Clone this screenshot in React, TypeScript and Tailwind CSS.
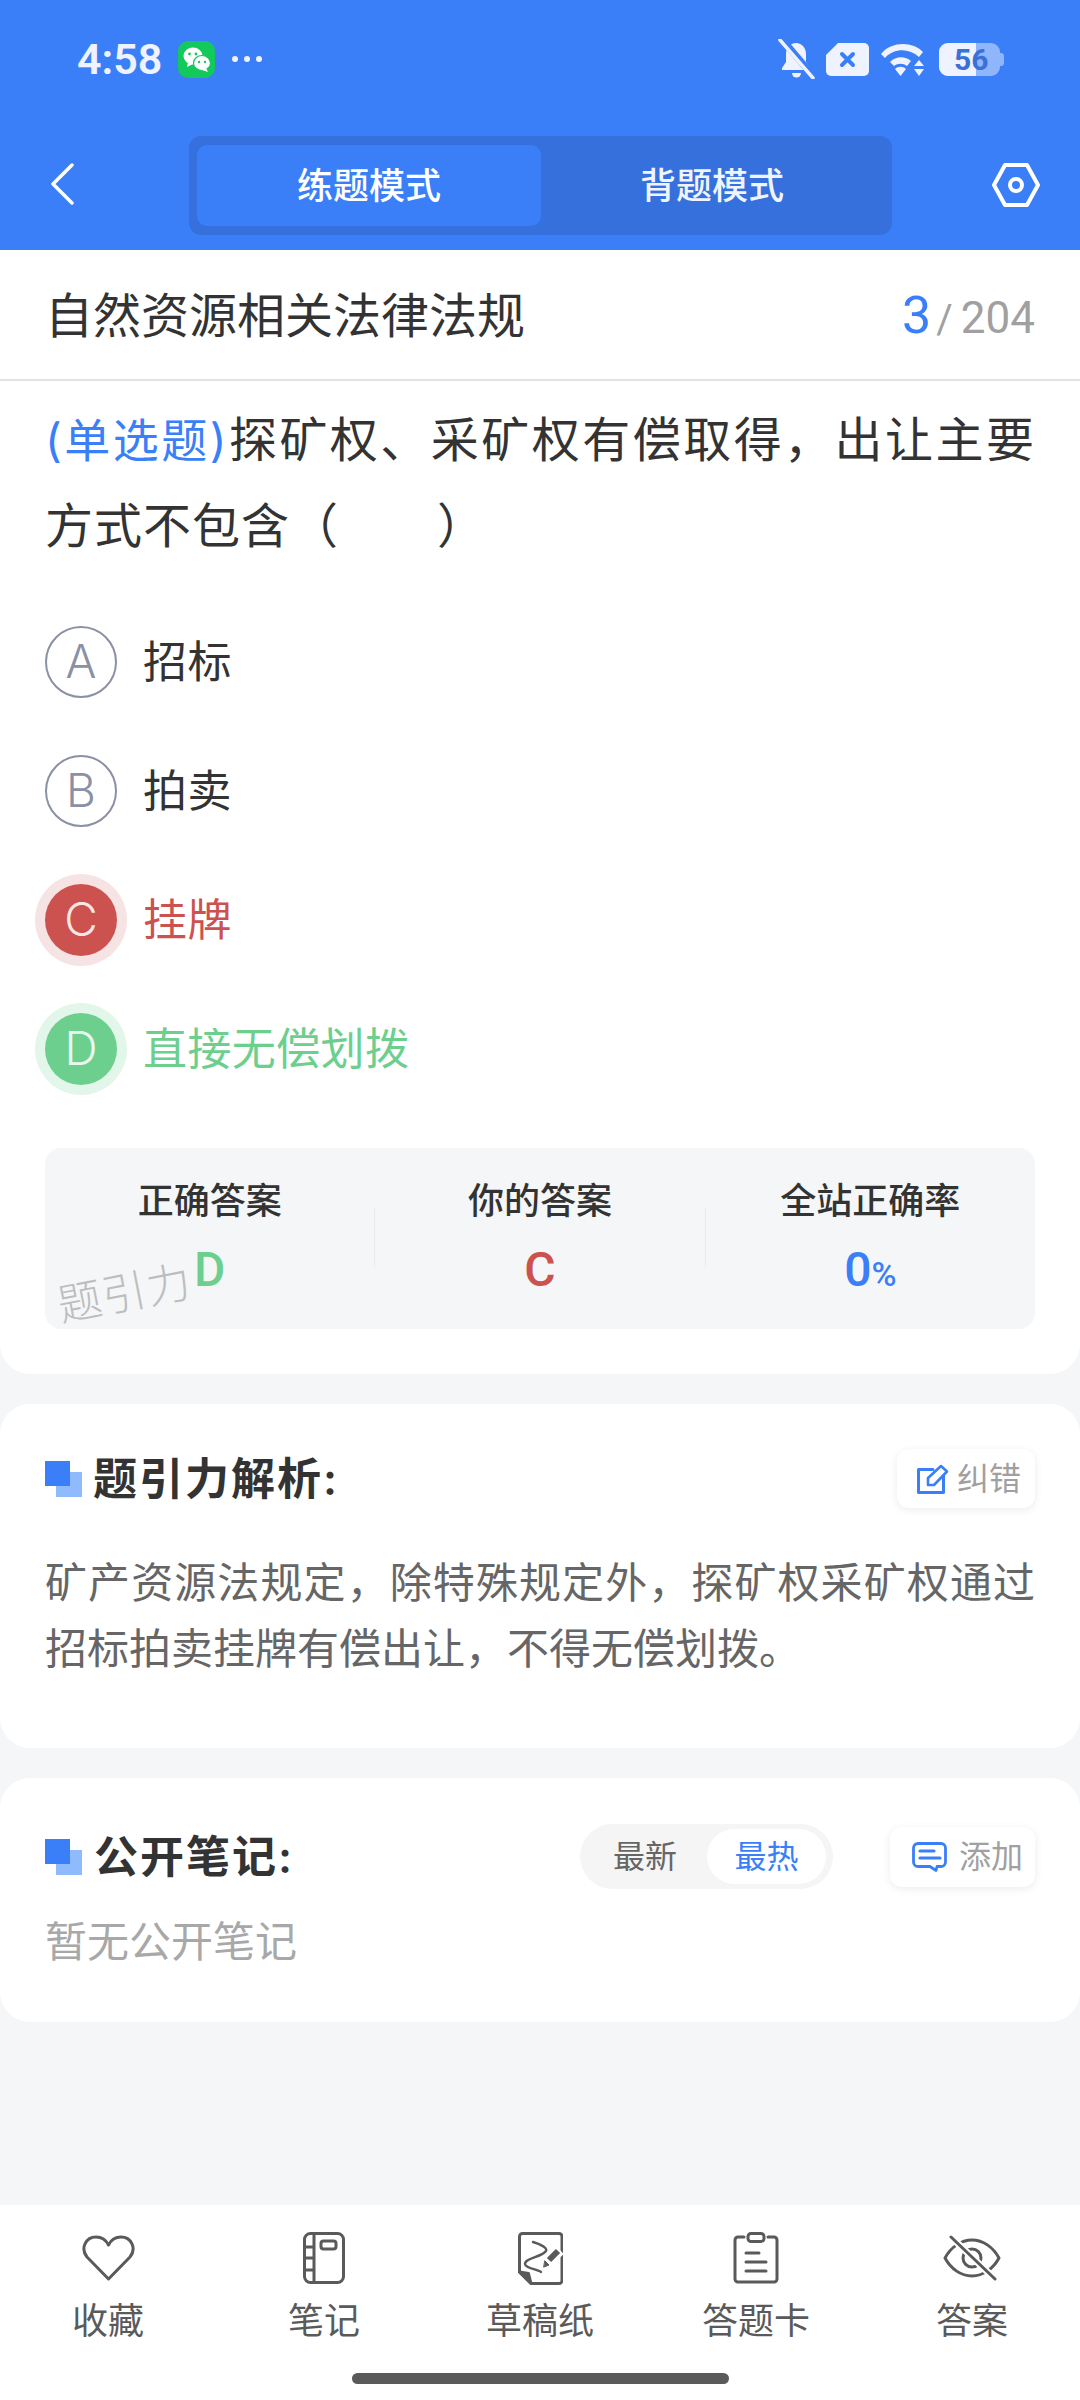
import React from "react";

const FONT = "font-['Inter','Noto_Sans_CJK_SC',sans-serif]";

function Squares() {
  return (
    <span className="relative block w-[37px] h-[36px] shrink-0">
      <span className="absolute left-[11px] top-[11px] w-[26px] h-[25px] bg-[#8fbafb]" />
      <span className="absolute left-0 top-0 w-[25px] h-[25px] bg-[#3b7ff8]" />
    </span>
  );
}

function Option({ letter, text, state }: { letter: string; text: string; state?: "wrong" | "right" }) {
  const circle =
    state === "wrong"
      ? "bg-[#cc5250] text-[#f8e6e5] shadow-[0_0_0_10px_#f6e4e4]"
      : state === "right"
      ? "bg-[#6dcf8e] text-[#e8f8ee] shadow-[0_0_0_10px_#e2f6ea]"
      : "border-2 border-[#8b90a5] text-[#8b90a5]";
  const label = state === "wrong" ? "text-[#cc5250]" : state === "right" ? "text-[#6dcf8e]" : "text-[#333333]";
  return (
    <div className="flex items-center h-[129px]">
      <div className={`w-[72px] h-[72px] rounded-full flex items-center justify-center text-[46px] font-light ${circle}`}>{letter}</div>
      <div className={`ml-[26px] text-[44px] tracking-[0.4px] ${label}`}>{text}</div>
    </div>
  );
}

function Stat({ label, children }: { label: string; children: React.ReactNode }) {
  return (
    <div className="flex-1 flex flex-col items-center">
      <div className="text-[36px] leading-[40px] font-medium text-[#333333] mt-[33px]">{label}</div>
      <div className="mt-[21px] h-[56px] leading-[56px] flex items-baseline font-['Roboto',sans-serif] text-[48px] font-medium">{children}</div>
    </div>
  );
}

function NavItem({ label, children }: { label: string; children: React.ReactNode }) {
  return (
    <div className="flex-1 flex flex-col items-center">
      <div className="h-[58px] flex items-center justify-center">{children}</div>
      <div className="mt-[13px] text-[36px] leading-[42px] text-[#5a5a5a]">{label}</div>
    </div>
  );
}

export default function App() {
  return (
    <div className={`${FONT} w-[1080px] h-[2400px] bg-[#f4f6f8] flex flex-col overflow-hidden`}>
      {/* Header */}
      <div className="h-[250px] bg-[#3b7ff8] text-white shrink-0 flex flex-col">
        <div className="h-[118px] pl-[77px] pr-[76px] flex items-center justify-between text-[#eef3ff]">
          <div className="flex items-center">
            <span className="text-[43px] font-['Roboto',sans-serif] font-semibold w-[89px]">4:58</span>
            <span className="ml-[12px] w-[37px] h-[37px] rounded-[10px] bg-[#14c95c] flex items-center justify-center">
              <svg viewBox="0 0 37 37" className="w-[37px] h-[37px]">
                <ellipse cx="15" cy="15" rx="9.500" ry="8.500" fill="#fff" />
                <path d="M10 21l-1 5 6-3z" fill="#fff" />
                <circle cx="11.500" cy="13" r="1.400" fill="#14c95c" />
                <circle cx="18" cy="13" r="1.400" fill="#14c95c" />
                <ellipse cx="24" cy="22" rx="8.500" ry="7.500" fill="#fff" stroke="#14c95c" strokeWidth="1.200" />
                <path d="M28 27l2 4-6-2z" fill="#fff" />
                <circle cx="21" cy="21" r="1.200" fill="#14c95c" />
                <circle cx="27" cy="21" r="1.200" fill="#14c95c" />
              </svg>
            </span>
            <span className="ml-[17px] flex gap-[6px]">
              <span className="w-[6px] h-[6px] rounded-full bg-[#eef3ff]" />
              <span className="w-[6px] h-[6px] rounded-full bg-[#eef3ff]" />
              <span className="w-[6px] h-[6px] rounded-full bg-[#eef3ff]" />
            </span>
          </div>
          <div className="flex items-center">
            <svg viewBox="0 0 37 40" className="w-[37px] h-[40px]">
              <path d="M18 4c6 0 10 5 10 11v8l4 6v2H4v-2l4-6v-8C8 9 12 4 18 4z" fill="#eef3ff" />
              <path d="M14 34h9a4.500 4.500 0 0 1-9 0z" fill="#eef3ff" />
              <path d="M3 -1L36 38" stroke="#3b7ff8" strokeWidth="7" />
              <path d="M2 1L35 39" stroke="#eef3ff" strokeWidth="3.500" strokeLinecap="round" />
            </svg>
            <svg viewBox="0 0 43 33" className="ml-[11px] w-[43px] h-[33px]">
              <path d="M12 0h26a5 5 0 0 1 5 5v23a5 5 0 0 1-5 5H5a5 5 0 0 1-5-5V12z" fill="#eef3ff" />
              <path d="M16 11l11 11M27 11L16 22" stroke="#3b7ff8" strokeWidth="4" strokeLinecap="round" />
            </svg>
            <svg viewBox="0 0 45 33" className="ml-[12px] w-[45px] h-[33px]">
              <path d="M0 11C10 -2 32 -2 42 9l-4 5C28 5 13 5 4 15z" fill="#eef3ff" />
              <path d="M9 19c6-6 15-6 21-1l-4 5c-4-3-9-3-13 0z" fill="#eef3ff" />
              <path d="M14 26c3-3 8-3 11 0l-5.500 7z" fill="#eef3ff" />
              <path d="M38 17l5 6H33zM38 33l-5-7h10z" fill="#eef3ff" />
            </svg>
            <span className="relative ml-[13px] w-[65px] h-[33px] flex items-center">
              <span className="absolute inset-y-0 left-0 right-[4px] rounded-[9px] bg-[#8fb5fb]" />
              <span className="absolute right-0 top-[10px] w-[5px] h-[13px] rounded-r-[3px] bg-[#8fb5fb]" />
              <span className="absolute inset-y-0 left-0 w-[37px] rounded-l-[9px] bg-[#eef3ff]" />
              <span className="relative ml-[15px] font-['Roboto',sans-serif] text-[30px] leading-[33px] font-bold text-[#3a70d8]">56</span>
            </span>
          </div>
        </div>
        <div className="flex-1 pl-[50px] pr-[40px] flex items-start">
          <svg viewBox="0 0 24 42" className="mt-[45px] w-[24px] h-[42px]" fill="none" stroke="#fff" strokeWidth="3.500" strokeLinecap="round" strokeLinejoin="round">
            <path d="M22 2L3 21l19 19" />
          </svg>
          <div className="ml-[115px] mt-[18px] w-[703px] h-[99px] rounded-[12px] bg-[#3570dc] pl-[8px] pt-[9px] flex">
            <div className="w-[344px] h-[81px] rounded-[10px] bg-[#3b7ff8] flex items-center justify-center text-[36px] font-medium">练题模式</div>
            <div className="w-[342px] h-[81px] flex items-center justify-center text-[36px] font-medium text-[#f0f4ff]">背题模式</div>
          </div>
          <svg viewBox="0 0 48 44" className="ml-[100px] mt-[45px] w-[48px] h-[44px]" fill="none" stroke="#fff" strokeWidth="4" strokeLinejoin="round">
            <path d="M13 2h22l11 20-11 20H13L2 22z" />
            <circle cx="24" cy="22" r="6" />
          </svg>
        </div>
      </div>

      {/* Question card */}
      <div className="bg-white rounded-b-[30px] h-[1124px] shrink-0 flex flex-col">
        <div className="h-[131px] shrink-0 border-b-2 border-[#e2e2e2] px-[45px] pt-[2px] flex items-center justify-between">
          <div className="text-[48px] text-[#333333]">自然资源相关法律法规</div>
          <div className="flex items-baseline font-['Roboto',sans-serif]">
            <span className="text-[52px] text-[#3b7ff8]">3</span>
            <span className="ml-[5px] text-[40px] text-[#a0a0a0]">/</span>
            <span className="ml-[8px] text-[44px] text-[#a0a0a0]">204</span>
          </div>
        </div>
        <div className="px-[45px] flex-1 flex flex-col">
          <div className="mt-[16px] text-[48px] leading-[86px] tracking-[1px] text-[#333333] text-justify">
            <span className="text-[46px] text-[#3b7ff8]">(单选题)</span>探矿权、采矿权有偿取得，出让主要方式不包含（　　）
          </div>
          <div className="mt-[28px] flex flex-col">
            <Option letter="A" text="招标" />
            <Option letter="B" text="拍卖" />
            <Option letter="C" text="挂牌" state="wrong" />
            <Option letter="D" text="直接无偿划拨" state="right" />
          </div>
          <div className="relative mt-[35px] h-[181px] rounded-[16px] bg-[#f4f6f8] flex">
            <Stat label="正确答案"><span className="text-[#6dcf8e]">D</span></Stat>
            <div className="w-[1px] h-[59px] mt-[60px] bg-[#e9ebee]" />
            <Stat label="你的答案"><span className="text-[#cc5250]">C</span></Stat>
            <div className="w-[1px] h-[59px] mt-[60px] bg-[#e9ebee]" />
            <Stat label="全站正确率"><span className="text-[#3b7ff8]">0<span className="text-[34px]">%</span></span></Stat>
            <div className="absolute left-[12px] top-[120px] text-[44px] leading-[50px] tracking-[1px] font-light text-[#bdbdbd] -rotate-[11deg]">题引力</div>
          </div>
        </div>
      </div>

      {/* Analysis card */}
      <div className="mt-[30px] bg-white rounded-[30px] h-[344px] shrink-0 px-[45px] flex flex-col">
        <div className="mt-[45px] h-[59px] flex items-center justify-between">
          <div className="flex items-center">
            <Squares />
            <span className="ml-[11px] text-[44px] font-semibold text-[#333333] tracking-[2px]">题引力解析:</span>
          </div>
          <div className="w-[138px] h-[59px] rounded-[12px] bg-white shadow-[0_2px_8px_rgba(0,0,0,0.08)] pl-[20px] flex items-center">
            <svg viewBox="0 0 32 30" className="w-[32px] h-[30px]" fill="none" stroke="#3b7ff8" strokeWidth="3" strokeLinejoin="round" strokeLinecap="round">
              <path d="M16 5.500H1.500v23h25V12" />
              <path d="M11 21v-7L24 2l6 5.500L17 21z" strokeWidth="2.600" />
            </svg>
            <span className="ml-[8px] text-[32px] text-[#a0a0a0]">纠错</span>
          </div>
        </div>
        <div className="mt-[42px] text-[42px] leading-[66px] text-[#666666] text-justify">
          矿产资源法规定，除特殊规定外，探矿权采矿权通过招标拍卖挂牌有偿出让，不得无偿划拨。
        </div>
      </div>

      {/* Notes card */}
      <div className="mt-[30px] bg-white rounded-[30px] h-[244px] shrink-0 px-[45px] flex flex-col">
        <div className="mt-[46px] h-[65px] flex items-center">
          <Squares />
          <span className="ml-[12px] text-[44px] font-semibold text-[#333333] tracking-[2px]">公开笔记:</span>
          <div className="ml-auto w-[253px] h-[65px] rounded-full bg-[#f5f5f5] flex items-center pl-[33px]">
            <span className="text-[32px] text-[#666666]">最新</span>
            <span className="ml-[30px] w-[119px] h-[55px] rounded-full bg-white flex items-center justify-center text-[32px] text-[#3b7ff8]">最热</span>
          </div>
          <div className="ml-[57px] w-[145px] h-[60px] rounded-[12px] bg-white shadow-[0_2px_8px_rgba(0,0,0,0.08)] pl-[22px] flex items-center">
            <svg viewBox="0 0 35 30" className="w-[35px] h-[30px]" fill="none" stroke="#3b7ff8" strokeWidth="2.800" strokeLinecap="round" strokeLinejoin="round">
              <path d="M6 1.500h23a4.500 4.500 0 0 1 4.500 4.500v14a4.500 4.500 0 0 1-4.500 4.500h-4l-1 4-6-4H6A4.500 4.500 0 0 1 1.500 20V6A4.500 4.500 0 0 1 6 1.500z" />
              <path d="M8 9h14M8 16h20" strokeWidth="3.200" />
            </svg>
            <span className="ml-[12px] text-[32px] text-[#a0a0a0]">添加</span>
          </div>
        </div>
        <div className="mt-[22px] text-[42px] leading-[62px] text-[#a8a8a8]">暂无公开笔记</div>
      </div>

      <div className="flex-1" />

      {/* Bottom bar */}
      <div className="h-[195px] shrink-0 bg-white flex flex-col">
        <div className="flex pt-[24px]">
          <NavItem label="收藏">
            <svg viewBox="0 0 53 46" className="w-[53px] h-[46px]" fill="none" stroke="#5a5a5a" strokeWidth="3" strokeLinejoin="round">
              <path d="M26.500 44L5 22C-2 13 4 2 14 2c6 0 10 3 12.500 8C29 5 33 2 39 2c10 0 16 11 9 20z" />
            </svg>
          </NavItem>
          <NavItem label="笔记">
            <svg viewBox="0 0 42 52" className="w-[42px] h-[52px]" fill="none" stroke="#5a5a5a" strokeWidth="3" strokeLinejoin="round">
              <rect x="1.500" y="1.500" width="39" height="49" rx="6" />
              <path d="M11 2v48M2 15h9M2 26h9M2 38h9" />
              <rect x="18" y="9" width="15" height="8" rx="2.500" />
            </svg>
          </NavItem>
          <NavItem label="草稿纸">
            <svg viewBox="0 0 45 53" className="w-[45px] h-[53px]" fill="none" stroke="#5a5a5a" strokeWidth="3" strokeLinecap="round" strokeLinejoin="round">
              <path d="M13 51.500h28a3 3 0 0 0 3-3V4.500a3 3 0 0 0-3-3H4.500a3 3 0 0 0-3 3V40z" />
              <path d="M1.500 40l9 1.500 2.500 10z" fill="#5a5a5a" />
              <path d="M15 10C22 12 30 16 28 19 24 25 7 26 7 32c0 4 11 5 16 8" strokeWidth="2.400" />
              <path d="M42 18L28 31" stroke="#fff" strokeWidth="11" strokeLinecap="butt" />
              <path d="M40 19L31 28" strokeWidth="6" strokeLinecap="butt" />
              <path d="M27 29l4 4-5 2z" fill="#5a5a5a" strokeWidth="1" />
            </svg>
          </NavItem>
          <NavItem label="答题卡">
            <svg viewBox="0 0 46 52" className="w-[46px] h-[52px]" fill="none" stroke="#5a5a5a" strokeWidth="3" strokeLinecap="round" strokeLinejoin="round">
              <path d="M11 5H5a3 3 0 0 0-3 3v39a3 3 0 0 0 3 3h36a3 3 0 0 0 3-3V8a3 3 0 0 0-3-3h-6" />
              <rect x="15" y="1.500" width="16" height="8" rx="3" />
              <path d="M13 21h13M13 30h20M13 39h20" />
            </svg>
          </NavItem>
          <NavItem label="答案">
            <svg viewBox="0 0 58 46" className="w-[58px] h-[46px]" fill="none" stroke="#5a5a5a" strokeWidth="3" strokeLinecap="round" strokeLinejoin="round">
              <path d="M2 23C8 12 18 5 29 5s21 7 27 18c-6 11-16 18-27 18S8 34 2 23z" />
              <circle cx="29" cy="23" r="9" />
              <path d="M8 2l44 42" stroke="#fff" strokeWidth="7" />
              <path d="M8 2l44 42" />
            </svg>
          </NavItem>
        </div>
        <div className="mt-[31px] mx-auto w-[377px] h-[11px] rounded-full bg-[#5a5a5a]" />
      </div>
    </div>
  );
}
